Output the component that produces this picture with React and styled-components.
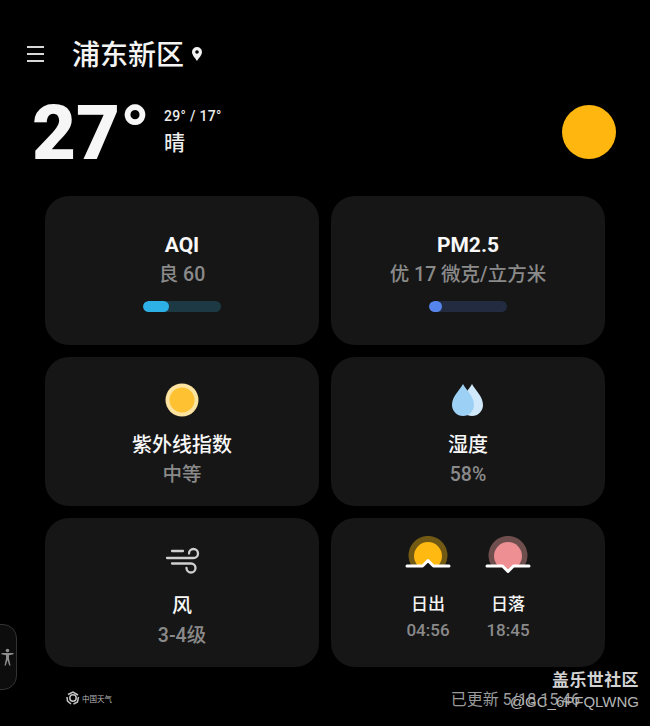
import React from "react";
import styled, { createGlobalStyle } from "styled-components";

const CJK = `Roboto, "Noto Sans CJK SC", sans-serif`;

const Global = createGlobalStyle`
  html, body { margin: 0; padding: 0; background: #000; }
  body { font-family: ${CJK}; }
`;

const Page = styled.div`
  position: relative;
  width: 650px;
  height: 726px;
  overflow: hidden;
  background: #000;
  color: #fff;
`;

const Header = styled.header`
  display: flex;
  align-items: center;
  height: 40px;
  padding: 36px 0 0 27px;
`;

const Menu = styled.div`
  display: flex;
  flex-direction: column;
  justify-content: space-between;
  width: 17px;
  height: 16px;
  margin: 0 28px 5px 0;
  span { display: block; height: 2px; background: #d8d8d8; }
`;

const City = styled.h1`
  margin: 0 7px 0 0;
  font-size: 28px;
  font-weight: 500;
  line-height: 40px;
  color: #f4f4f4;
`;

const PinBox = styled.div`
  margin-bottom: 4px;
  svg { display: block; }
`;

const Current = styled.section`
  display: flex;
  align-items: flex-start;
  height: 100px;
  padding: 20px 34px 0 32px;
`;

const Temp = styled.div`
  font-size: 76px;
  font-weight: 900;
  line-height: 94px;
  margin-top: -10px;
  color: #f6f6f6;
  width: 132px;
`;

const Detail = styled.div`
  display: flex;
  flex-direction: column;
  margin-top: 11px;
`;

const Range = styled.div`
  font-size: 14px;
  font-weight: 500;
  line-height: 18px;
  color: #ececec;
  letter-spacing: 0.3px;
`;

const Cond = styled.div`
  font-size: 21px;
  font-weight: 500;
  line-height: 30px;
  margin-top: 3px;
  color: #ececec;
`;

const Sun = styled.div`
  width: 54px;
  height: 54px;
  margin: 9px 0 0 auto;
  border-radius: 50%;
  background: #ffb70f;
`;

const Grid = styled.main`
  display: grid;
  grid-template-columns: 274px 274px;
  grid-auto-rows: 149px;
  gap: 12px;
  padding: 0 0 0 45px;
`;

const Card = styled.article`
  display: flex;
  flex-direction: column;
  align-items: center;
  border-radius: 24px;
  background: #161616;
  padding-top: ${p => p.$top}px;
`;

const Title = styled.div`
  font-size: ${p => p.$size || 20}px;
  font-weight: ${p => (p.$size ? 700 : 500)};
  line-height: 30px;
  color: #f8f8f8;
`;

const Value = styled.div`
  font-size: 19.5px;
  font-weight: 500;
  line-height: 28px;
  margin-top: 1px;
  color: #8a8a8a;
  white-space: nowrap;
`;

const Track = styled.div`
  width: 78px;
  height: 11px;
  margin-top: 12px;
  border-radius: 6px;
  background: ${p => p.$bg};
  overflow: hidden;
`;

const Fill = styled.div`
  height: 100%;
  border-radius: 6px;
  background: ${p => p.$color};
`;

const IconBox = styled.div`
  height: 36px;
  margin-bottom: 12px;
  svg { display: block; }
`;

const SunPair = styled.div`
  display: grid;
  grid-template-columns: 80px 80px;
`;

const SunCol = styled.div`
  display: flex;
  flex-direction: column;
  align-items: center;
  svg { display: block; }
`;

const SmallTitle = styled.div`
  font-size: 17px;
  font-weight: 500;
  line-height: 26px;
  margin-top: 15px;
  color: #f4f4f4;
`;

const SmallValue = styled.div`
  font-size: 17px;
  font-weight: 500;
  line-height: 24px;
  margin-top: 1px;
  color: #8a8a8a;
`;

const Footer = styled.footer`
  display: flex;
  justify-content: space-between;
  align-items: center;
  height: 24px;
  margin-top: 19px;
  padding: 0 70px 0 66px;
`;

const Brand = styled.div`
  display: flex;
  align-items: center;
  gap: 2px;
  font-size: 7.5px;
  color: #b8b8b8;
`;

const Updated = styled.div`
  font-size: 16px;
  color: #9a9a9a;
  white-space: nowrap;
`;

const Handle = styled.div`
  position: absolute;
  left: -14px;
  top: 624px;
  width: 31px;
  height: 66px;
  border: 1px solid #333;
  border-radius: 14px;
  background: #0d0d0d;
  display: flex;
  align-items: center;
  justify-content: flex-end;
  padding-right: 2px;
  box-sizing: border-box;
`;

const Watermark = styled.div`
  position: absolute;
  right: 11px;
  top: 670px;
  display: flex;
  flex-direction: column;
  align-items: flex-end;
  color: #d2d2d2;
`;

const MarkTitle = styled.div`
  font-size: 17px;
  font-weight: 700;
  line-height: 20px;
  letter-spacing: 0.4px;
`;

const MarkUser = styled.div`
  font-family: "Liberation Sans", sans-serif;
  font-size: 15px;
  line-height: 20px;
  margin-top: 2px;
  color: #b5b5b5;
`;

const Pin = () => (
  <svg width="12" height="16" viewBox="0 0 12 16">
    <path fillRule="evenodd" fill="#f2f2f2" d="M6 1a5 5 0 0 1 5 5c0 3.2-3.3 6.2-5 9-1.700-2.800-5-5.800-5-9a5 5 0 0 1 5-5Zm0 3.200a1.800 1.800 0 1 0 0 3.600 1.800 1.800 0 0 0 0-3.600Z" />
  </svg>
);

const UvIcon = () => (
  <svg width="36" height="36" viewBox="0 0 36 36">
    <circle cx="18" cy="18" r="16.500" fill="#fde3a0" />
    <circle cx="18" cy="18" r="12.500" fill="#fdc131" />
  </svg>
);

const DROP = "M13 2C16 8 24 14 24 23A11 11 0 0 1 2 23C2 14 10 8 13 2Z";

const DropIcon = () => (
  <svg width="36" height="36" viewBox="0 0 36 36">
    <path fill="#cfe8fa" d={DROP} transform="translate(9 0)" />
    <path fill="#9dd0f5" d={DROP} />
  </svg>
);

const WindIcon = () => (
  <svg width="36" height="36" viewBox="0 0 36 36" fill="none" stroke="#cfcfcf" strokeWidth="2.300" strokeLinecap="round">
    <path d="M8 8H19" />
    <path d="M3 15H29.500A4.500 4.500 0 1 0 25 10.500" />
    <path d="M8 20.500H27A4.500 4.500 0 1 1 22.500 25" />
  </svg>
);

const SunriseIcon = () => (
  <svg width="46" height="40" viewBox="0 0 46 40">
    <path fill="#735a14" d="M6.600 30A19.500 19.500 0 1 1 39.400 30Z" />
    <path fill="#ffb911" d="M13.200 30A14 14 0 1 1 32.800 30Z" />
    <path fill="#161616" d="M17.500 31 23 25 28.500 31Z" />
    <path fill="none" stroke="#fff" strokeWidth="3" strokeLinecap="round" strokeLinejoin="round" d="M2 30H17.500L23 24.500 28.500 30H44" />
  </svg>
);

const SunsetIcon = () => (
  <svg width="46" height="40" viewBox="0 0 46 40">
    <path fill="#6f4f4d" d="M6.600 30A19.500 19.500 0 1 1 39.400 30Z" />
    <path fill="#ee8f93" d="M13.200 30A14 14 0 1 1 32.800 30Z" />
    <path fill="#ee8f93" d="M17.500 29 23 35 28.500 29Z" />
    <path fill="none" stroke="#fff" strokeWidth="3" strokeLinecap="round" strokeLinejoin="round" d="M2 30H17.500L23 35.500 28.500 30H44" />
  </svg>
);

const BrandLogo = () => (
  <svg width="14" height="14" viewBox="0 0 14 14" fill="none" stroke="#c4c4c4" strokeWidth="1.500">
    <circle cx="7" cy="7" r="3.200" />
    <path d="M2 3.500 7 1l5 3M12.500 6l-1 5-4 2M5 13 1.500 10 1 6" />
  </svg>
);

const PersonIcon = () => (
  <svg width="13" height="18" viewBox="0 0 13 18" fill="#8d8d8d">
    <circle cx="6.500" cy="2.500" r="1.800" />
    <path d="M.5 5h12v1.300L8 7.200v3.300l1.500 7H8.200L6.500 12l-1.700 5.500H3.500l1.500-7V7.200L.5 6.300Z" />
  </svg>
);

export default function App() {
  return (
    <Page>
      <Global />
      <Header>
        <Menu><span /><span /><span /></Menu>
        <City>浦东新区</City>
        <PinBox><Pin /></PinBox>
      </Header>
      <Current>
        <Temp>27°</Temp>
        <Detail>
          <Range>29° / 17°</Range>
          <Cond>晴</Cond>
        </Detail>
        <Sun />
      </Current>
      <Grid>
        <Card $top={34}>
          <Title $size={21}>AQI</Title>
          <Value>良 60</Value>
          <Track $bg="#1d3a44"><Fill $color="#2cb0e6" style={{ width: "33%" }} /></Track>
        </Card>
        <Card $top={34}>
          <Title $size={21}>PM2.5</Title>
          <Value>优 17 微克/立方米</Value>
          <Track $bg="#232b40"><Fill $color="#5585ea" style={{ width: "17%" }} /></Track>
        </Card>
        <Card $top={25}>
          <IconBox><UvIcon /></IconBox>
          <Title>紫外线指数</Title>
          <Value>中等</Value>
        </Card>
        <Card $top={25}>
          <IconBox><DropIcon /></IconBox>
          <Title>湿度</Title>
          <Value>58%</Value>
        </Card>
        <Card $top={25}>
          <IconBox><WindIcon /></IconBox>
          <Title>风</Title>
          <Value>3-4级</Value>
        </Card>
        <Card $top={18}>
          <SunPair>
            <SunCol>
              <SunriseIcon />
              <SmallTitle>日出</SmallTitle>
              <SmallValue>04:56</SmallValue>
            </SunCol>
            <SunCol>
              <SunsetIcon />
              <SmallTitle>日落</SmallTitle>
              <SmallValue>18:45</SmallValue>
            </SunCol>
          </SunPair>
        </Card>
      </Grid>
      <Footer>
        <Brand><BrandLogo />中国天气</Brand>
        <Updated>已更新 5/18 15:46</Updated>
      </Footer>
      <Handle><PersonIcon /></Handle>
      <Watermark>
        <MarkTitle>盖乐世社区</MarkTitle>
        <MarkUser>@GC_6PFQLWNG</MarkUser>
      </Watermark>
    </Page>
  );
}
